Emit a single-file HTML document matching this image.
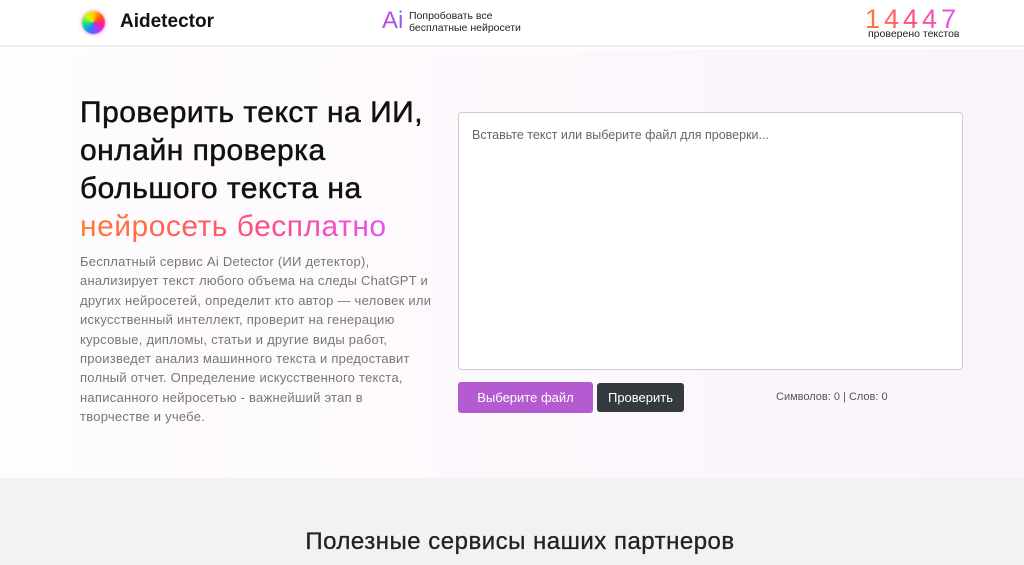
<!DOCTYPE html>
<html><head><meta charset="utf-8"><style>
*{margin:0;padding:0;box-sizing:border-box}
body{width:1024px;height:565px;overflow:hidden;font-family:"Liberation Sans","DejaVu Sans",sans-serif;background:#fff;position:relative}
.hdr{position:absolute;left:0;top:0;width:1024px;height:47px;background:#fff;border-bottom:2px solid #f0eef0}
.logo{position:absolute;left:82px;top:11px;width:23px;height:23px;border-radius:50%;background:conic-gradient(from 0deg,#ffd000,#ff5a00,#ff1aa0,#a040ff,#2a7bff,#00e090,#c0ff00,#ffd000);filter:blur(0.6px);box-shadow:0 0 4px rgba(255,0,200,.5)}
.brand{position:absolute;left:120px;top:11px;font-size:19px;font-weight:bold;color:#111}
.ai{position:absolute;left:382px;top:7px;font-size:24px;background:linear-gradient(90deg,#d040e0,#8a5cf0);-webkit-background-clip:text;color:transparent}
.try{position:absolute;left:409px;top:10px;font-size:10.5px;line-height:12px;color:#222}
.cnt{position:absolute;left:865px;top:4px;font-size:27px;letter-spacing:4px;background:linear-gradient(90deg,#ff7a30,#ff4d80,#e255f0);-webkit-background-clip:text;color:transparent;line-height:30px}
.cl{position:absolute;left:868px;top:28px;font-size:10.5px;color:#222}
.hero{position:absolute;left:0;top:49px;width:1024px;height:429px;background:linear-gradient(90deg,#fefcfe,#fbf4fb)}
h1{position:absolute;left:80px;top:94px;font-size:30px;line-height:38px;font-weight:normal;color:#111;letter-spacing:.5px;-webkit-text-stroke:.5px #111}
h1 span{background:linear-gradient(90deg,#ff7a30,#ff4d80 60%,#e255f0);-webkit-background-clip:text;color:transparent;-webkit-text-stroke:0}
.p{position:absolute;left:80px;top:252px;width:360px;font-size:13px;line-height:19.4px;color:#777;letter-spacing:.25px}
.ta{position:absolute;left:458px;top:112px;width:505px;height:258px;border:1px solid #ccc;border-radius:4px;background:#fff}
.ta div{position:absolute;left:13px;top:15px;font-size:12.5px;color:#666}
.b1{position:absolute;left:458px;top:382px;width:135px;height:31px;background:#b55bd1;border-radius:3px;color:#fff;font-size:13px;text-align:center;line-height:31px}
.b2{position:absolute;left:597px;top:383px;width:87px;height:29px;background:#343a40;border-radius:3px;color:#fff;font-size:13px;text-align:center;line-height:29px}
.sym{position:absolute;left:776px;top:391px;font-size:11px;color:#555}
.sec{position:absolute;left:0;top:478px;width:1024px;height:87px;background:#f2f2f2}
.sec h2{position:absolute;left:8px;width:1024px;top:50px;text-align:center;font-size:24px;font-weight:normal;color:#222;letter-spacing:.5px;-webkit-text-stroke:.3px #222}
</style></head><body>
<div class="hdr">
<div class="logo"></div><div class="brand">Aidetector</div>
<div class="ai">Ai</div><div class="try">Попробовать все<br>бесплатные нейросети</div>
<div class="cnt">14447</div><div class="cl">проверено текстов</div>
</div>
<div class="hero"></div>
<h1>Проверить текст на ИИ,<br>онлайн проверка<br>большого текста на<br><span>нейросеть бесплатно</span></h1>
<div class="p">Бесплатный сервис Ai Detector (ИИ детектор), анализирует текст любого объема на следы ChatGPT и других нейросетей, определит кто автор — человек или искусственный интеллект, проверит на генерацию курсовые, дипломы, статьи и другие виды работ, произведет анализ машинного текста и предоставит полный отчет. Определение искусственного текста, написанного нейросетью - важнейший этап в<br>творчестве и учебе.</div>
<div class="ta"><div>Вставьте текст или выберите файл для проверки...</div></div>
<div class="b1">Выберите файл</div><div class="b2">Проверить</div>
<div class="sym">Символов: 0 | Слов: 0</div>
<div class="sec"><h2>Полезные сервисы наших партнеров</h2></div>
</body></html>
